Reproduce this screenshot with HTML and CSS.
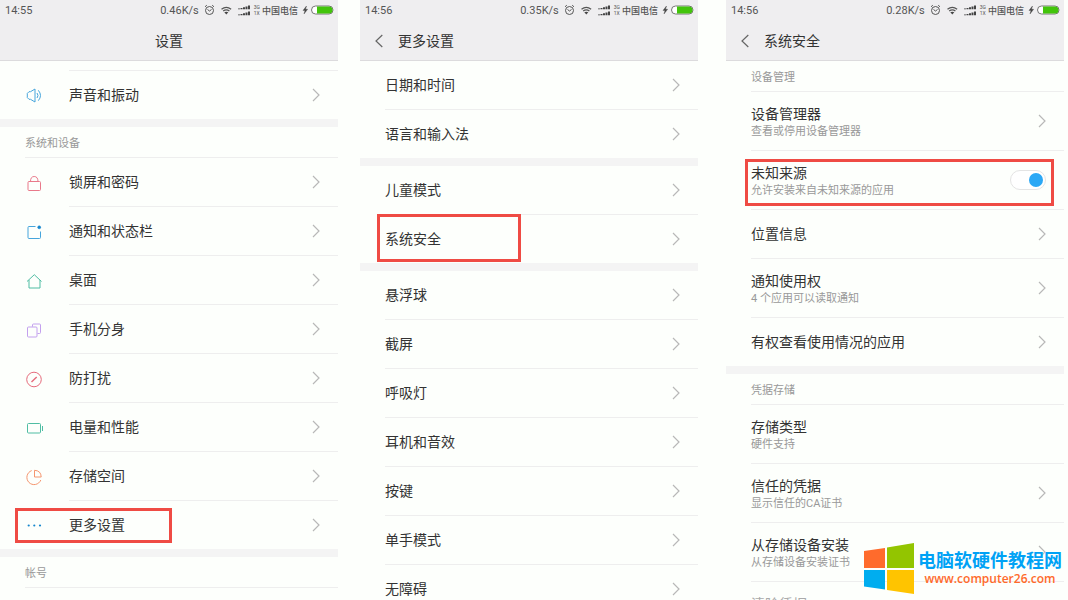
FILE: index.html
```
<!DOCTYPE html>
<html lang="zh-CN">
<head>
    <meta charset="UTF-8">
    <meta name="viewport" content="width=device-width, initial-scale=1.0">
    <title>设置</title>
    <link rel="stylesheet" href="styles.css">
</head>
<body>

    <!-- Shared icons -->
    <svg class="sprite" aria-hidden="true">
        <symbol id="chevron" viewBox="0 0 8 14">
            <path d="M1 1l6 6-6 6" fill="none" stroke="#b8b8b8" stroke-width="1.2"/>
        </symbol>
        <symbol id="back" viewBox="0 0 8 14">
            <path d="M7.3 1L1 7l6.3 6" fill="none" stroke="#666" stroke-width="1.2"/>
        </symbol>
        <symbol id="status" viewBox="0 0 54 12">
            <g fill="none" stroke="#555">
                <circle cx="5.5" cy="6.5" r="4"/>
                <path d="M3.5 5.5l2 1.5 2-1.5M1 2.8l1.8-1.6M10 2.8L8.2 1.2"/>
                <path d="M17.5 5.2q4.800-3.6 9.6 0M19.2 7q3.100-2.4 6.200 0" stroke-width="1.3"/>
            </g>
            <path d="M20.3 8.3q2-1.3 4 0l-2 2.200z" fill="#444"/>
            <g fill="#444">
                <path d="M34 4.400h2v.8h-2zM36.500 3.900h2v1.300h-2zM39 3.200h2v2h-2zM41.500 2.400h2v2.800h-2zM44 1.600h2v3.600h-2z"/>
                <path d="M34 10.400h2v.8h-2zM36.500 9.900h2v1.300h-2zM39 9.200h2v2h-2zM41.500 8.400h2v2.800h-2zM44 7.600h2v3.600h-2z"/>
            </g>
        </symbol>
        <symbol id="battery" viewBox="0 0 32 10">
            <path d="M4.500 1L1 5.400h2L2 9l3.600-4.700H3.500z" fill="#444" stroke="#444" stroke-width=".4"/>
            <rect x="9.500" y="1" width="21.500" height="8" rx="4" fill="#fff" stroke="#777"/>
            <path d="M15 1.500h12q3.500 0 3.500 3.500T27 8.500H15z" fill="#42c40b"/>
        </symbol>
    </svg>

    <main class="screens">

        <!-- Settings -->
        <section class="phone">
            <header class="top">
                <div class="status">
                    <span class="time">14:55</span>
                    <span class="speed">0.46K/s</span>
                    <svg class="status-icons"><use href="#status"/></svg>
                    <span class="net"><span>3G</span><span>1X</span></span>
                    <span class="carrier">中国电信</span>
                    <svg class="battery"><use href="#battery"/></svg>
                </div>
                <div class="bar bar-center"><h1>设置</h1></div>
            </header>
            <div class="list">
                <div class="row row-cut"><span class="icon"></span><span class="body"></span></div>
                <a class="row" href="#">
                    <svg class="icon" viewBox="0 0 18 18" stroke="#46a5dc"><path d="M10 3v13L5.500 13.300H4L2.300 11.600V7.400L4 5.700h1.500zM12 7q2 2.500 0 5M13.300 4.300q4.400 5.200 0 10.400"/></svg>
                    <span class="body"><span class="title">声音和振动</span><svg class="chevron"><use href="#chevron"/></svg></span>
                </a>
            </div>
            <h2>系统和设备</h2>
            <div class="list">
                <a class="row" href="#">
                    <svg class="icon" viewBox="0 0 18 18" stroke="#e9798a"><rect x="3" y="7.500" width="12.500" height="9" rx="1"/><path d="M5.500 7.500Q5.500 2.500 9.200 2.500T13 7.500"/></svg>
                    <span class="body"><span class="title">锁屏和密码</span><svg class="chevron"><use href="#chevron"/></svg></span>
                </a>
                <a class="row" href="#">
                    <svg class="icon" viewBox="0 0 18 18" stroke="#46a5dc"><path d="M10.500 3.500H4Q3 3.500 3 4.500v10q0 1 1 1h10.500q1 0 1-1V8.500"/><circle cx="14.200" cy="4.300" r="1.500" fill="#1687ce" stroke="#1687ce" stroke-width=".5"/></svg>
                    <span class="body"><span class="title">通知和状态栏</span><svg class="chevron"><use href="#chevron"/></svg></span>
                </a>
                <a class="row" href="#">
                    <svg class="icon" viewBox="0 0 18 18" stroke="#4fbda3"><path d="M2 9.500l7.300-6.800 7.200 6.800M4 8v8h11V8"/></svg>
                    <span class="body"><span class="title">桌面</span><svg class="chevron"><use href="#chevron"/></svg></span>
                </a>
                <a class="row" href="#">
                    <svg class="icon" viewBox="0 0 18 18" stroke="#c3a0ee"><rect x="2.500" y="6" width="9.500" height="10" rx="1"/><path d="M7.500 5.700V4q0-1 1-1h6q1 0 1 1v7.500q0 1-1 1h-2"/></svg>
                    <span class="body"><span class="title">手机分身</span><svg class="chevron"><use href="#chevron"/></svg></span>
                </a>
                <a class="row" href="#">
                    <svg class="icon" viewBox="0 0 18 18" stroke="#e66a7b"><circle cx="9" cy="9.500" r="7.300"/><path d="M6.500 12l5.200-5" stroke-width="1.400"/></svg>
                    <span class="body"><span class="title">防打扰</span><svg class="chevron"><use href="#chevron"/></svg></span>
                </a>
                <a class="row" href="#">
                    <svg class="icon" viewBox="0 0 18 18" stroke="#4fbda3"><rect x="2.500" y="4.500" width="13" height="9.500" rx="1"/><path d="M17.500 7v5"/></svg>
                    <span class="body"><span class="title">电量和性能</span><svg class="chevron"><use href="#chevron"/></svg></span>
                </a>
                <a class="row" href="#">
                    <svg class="icon" viewBox="0 0 18 18" stroke="#f5966f"><path d="M6.700 2.600A7.200 7.200 0 1 0 15.800 12M9.500 2.300V9h6.700Q16 2.600 9.500 2.300z"/></svg>
                    <span class="body"><span class="title">存储空间</span><svg class="chevron"><use href="#chevron"/></svg></span>
                </a>
                <a class="row" href="#">
                    <svg class="icon" viewBox="0 0 18 18"><g fill="#1687ce"><circle cx="3.700" cy="9.500" r="1.100"/><circle cx="9.300" cy="9.500" r="1.100"/><circle cx="15" cy="9.500" r="1.100"/></g></svg>
                    <span class="body"><span class="title">更多设置</span><svg class="chevron"><use href="#chevron"/></svg></span>
                    <span class="mark mark-more"></span>
                </a>
            </div>
            <h2>帐号</h2>
        </section>

        <!-- More settings -->
        <section class="phone">
            <header class="top">
                <div class="status">
                    <span class="time">14:56</span>
                    <span class="speed">0.35K/s</span>
                    <svg class="status-icons"><use href="#status"/></svg>
                    <span class="net"><span>3G</span><span>1X</span></span>
                    <span class="carrier">中国电信</span>
                    <svg class="battery"><use href="#battery"/></svg>
                </div>
                <div class="bar">
                    <button class="back" type="button" aria-label="返回"><svg><use href="#back"/></svg></button>
                    <h1>更多设置</h1>
                </div>
            </header>
            <div class="list">
                <a class="row" href="#"><span class="body"><span class="title">日期和时间</span><svg class="chevron"><use href="#chevron"/></svg></span></a>
                <a class="row" href="#"><span class="body"><span class="title">语言和输入法</span><svg class="chevron"><use href="#chevron"/></svg></span></a>
            </div>
            <div class="list">
                <a class="row" href="#"><span class="body"><span class="title">儿童模式</span><svg class="chevron"><use href="#chevron"/></svg></span></a>
                <a class="row" href="#">
                    <span class="body"><span class="title">系统安全</span><svg class="chevron"><use href="#chevron"/></svg></span>
                    <span class="mark mark-security"></span>
                </a>
            </div>
            <div class="list">
                <a class="row" href="#"><span class="body"><span class="title">悬浮球</span><svg class="chevron"><use href="#chevron"/></svg></span></a>
                <a class="row" href="#"><span class="body"><span class="title">截屏</span><svg class="chevron"><use href="#chevron"/></svg></span></a>
                <a class="row" href="#"><span class="body"><span class="title">呼吸灯</span><svg class="chevron"><use href="#chevron"/></svg></span></a>
                <a class="row" href="#"><span class="body"><span class="title">耳机和音效</span><svg class="chevron"><use href="#chevron"/></svg></span></a>
                <a class="row" href="#"><span class="body"><span class="title">按键</span><svg class="chevron"><use href="#chevron"/></svg></span></a>
                <a class="row" href="#"><span class="body"><span class="title">单手模式</span><svg class="chevron"><use href="#chevron"/></svg></span></a>
                <a class="row" href="#"><span class="body"><span class="title">无障碍</span><svg class="chevron"><use href="#chevron"/></svg></span></a>
            </div>
        </section>

        <!-- System security -->
        <section class="phone">
            <header class="top">
                <div class="status">
                    <span class="time">14:56</span>
                    <span class="speed">0.28K/s</span>
                    <svg class="status-icons"><use href="#status"/></svg>
                    <span class="net"><span>3G</span><span>1X</span></span>
                    <span class="carrier">中国电信</span>
                    <svg class="battery"><use href="#battery"/></svg>
                </div>
                <div class="bar">
                    <button class="back" type="button" aria-label="返回"><svg><use href="#back"/></svg></button>
                    <h1>系统安全</h1>
                </div>
            </header>
            <h2>设备管理</h2>
            <div class="list">
                <a class="row row-tall" href="#">
                    <span class="body"><span class="text"><span class="title">设备管理器</span><span class="sub">查看或停用设备管理器</span></span><svg class="chevron"><use href="#chevron"/></svg></span>
                </a>
                <label class="row row-tall" for="unknown-sources">
                    <span class="body"><span class="text"><span class="title">未知来源</span><span class="sub">允许安装来自未知来源的应用</span></span><input class="switch" type="checkbox" id="unknown-sources" checked></span>
                    <span class="mark mark-unknown"></span>
                </label>
                <a class="row" href="#"><span class="body"><span class="title">位置信息</span><svg class="chevron"><use href="#chevron"/></svg></span></a>
                <a class="row row-tall" href="#">
                    <span class="body"><span class="text"><span class="title">通知使用权</span><span class="sub">4 个应用可以读取通知</span></span><svg class="chevron"><use href="#chevron"/></svg></span>
                </a>
                <a class="row" href="#"><span class="body"><span class="title">有权查看使用情况的应用</span><svg class="chevron"><use href="#chevron"/></svg></span></a>
            </div>
            <h2>凭据存储</h2>
            <div class="list">
                <div class="row row-tall">
                    <span class="body"><span class="text"><span class="title">存储类型</span><span class="sub">硬件支持</span></span></span>
                </div>
                <a class="row row-tall" href="#">
                    <span class="body"><span class="text"><span class="title">信任的凭据</span><span class="sub">显示信任的CA证书</span></span><svg class="chevron"><use href="#chevron"/></svg></span>
                </a>
                <a class="row row-tall" href="#">
                    <span class="body"><span class="text"><span class="title">从存储设备安装</span><span class="sub">从存储设备安装证书</span></span><svg class="chevron"><use href="#chevron"/></svg></span>
                </a>
                <div class="row row-tall disabled">
                    <span class="body"><span class="text"><span class="title">清除凭据</span></span></span>
                </div>
            </div>
        </section>
    </main>

    <!-- Site logo -->
    <div class="watermark">
        <svg viewBox="0 0 50 51" width="50" height="51">
            <path d="M0 8l21-3v20H0z" fill="#ff6b2c"/>
            <path d="M23 4.500L50 0v25H23z" fill="#93c500"/>
            <path d="M0 27h21v19.500L0 43.500z" fill="#00adef"/>
            <path d="M23 27h27v24l-27-4z" fill="#ffc400"/>
        </svg>
        <div class="watermark-text">
            <strong>电脑软硬件教程网</strong>
            <span>www.computer26.com</span>
        </div>
    </div>

</body>
</html>
```
FILE: styles.css
```
* {
    box-sizing: border-box;
}
body {
    margin: 0;
    background: #fdfffc;
    color: #333;
    font-family: Roboto, "Noto Sans CJK SC", sans-serif;
    font-size: 14px;
}
a {
    color: inherit;
    text-decoration: none;
}
h1, h2 {
    margin: 0;
    font-weight: normal;
}
.sprite {
    display: none;
}
.screens {
    display: flex;
    gap: 22px;
    height: 100vh;
    padding-right: 4px;
    overflow: hidden;
}
.phone {
    flex: 1;
    min-width: 0;
}
.phone:last-child {
    margin-left: 6px;
}

/* status bar and title */
.top {
    height: 61px;
    background: #efeef0;
    border-bottom: 1px solid #dcdbdd;
}
.status {
    display: flex;
    align-items: center;
    height: 20px;
    padding: 0 4px 0 5px;
    font-size: 11px;
    color: #555;
}
.speed {
    margin-left: auto;
}
.status-icons {
    width: 54px;
    height: 12px;
    margin-left: 5px;
    margin-right: -4px;
}
.net {
    display: flex;
    flex-direction: column;
    margin-right: 2px;
    font-size: 5px;
    line-height: 6px;
}
.carrier {
    font-size: 9px;
    font-weight: 500;
}
.battery {
    width: 32px;
    height: 10px;
    margin-left: 4px;
}
.bar {
    display: flex;
    align-items: center;
    height: 41px;
    padding-left: 15px;
}
.bar-center {
    justify-content: center;
    padding: 0;
}
.bar h1 {
    font-size: 14px;
    line-height: 20px;
}
.back {
    width: 23px;
    height: 20px;
    padding: 3px 0;
    border: 0;
    background: none;
}
.back svg {
    display: block;
    width: 8px;
    height: 14px;
}

/* lists */
.list + .list,
.list + h2 {
    border-top: 8px solid #f4f4f4;
}
h2 {
    padding-top: 3px;
    padding-left: 25px;
    font-size: 11px;
    line-height: 27px;
    color: #999;
}
h2::after {
    content: "";
    display: block;
    height: 1px;
    background: #eee;
}
.row {
    display: flex;
    align-items: center;
    position: relative;
    padding-left: 25px;
}
.icon {
    flex: none;
    width: 18px;
    height: 18px;
    margin-right: 26px;
    fill: none;
}
.body {
    flex: 1;
    display: flex;
    align-items: center;
    justify-content: space-between;
    height: 49px;
    padding-right: 18px;
    border-bottom: 1px solid #eee;
}
.row:last-child .body {
    height: 48px;
    border-bottom: 0;
}
.row-cut,
.row-cut .body {
    height: 10px;
}
.row-tall .body,
.row-tall:last-child .body {
    height: 59px;
}
.text {
    display: flex;
    flex-direction: column;
    align-self: flex-start;
    padding-top: 13px;
}
.title {
    line-height: 18px;
}
.sub {
    font-size: 11px;
    line-height: 17px;
    color: #999;
}
.disabled {
    color: #aaa;
}
.chevron {
    width: 8px;
    height: 14px;
}

.switch {
    appearance: none;
    width: 36px;
    height: 20px;
    margin: 0;
    padding: 2px;
    border: 1px solid #e4e4e4;
    border-radius: 10px;
    background: #fff;
}
.switch::before {
    content: "";
    display: block;
    width: 14px;
    height: 14px;
    border-radius: 50%;
    background: #ccc;
}
.switch:checked::before {
    margin-left: auto;
    background: #2ba8f5;
}

/* red frames over the rows */
.mark {
    position: absolute;
    border: 3px solid #ef4b44;
}
.mark-more {
    top: 7px;
    left: 15px;
    width: 157px;
    height: 35px;
}
.mark-security {
    top: -1px;
    left: 17px;
    width: 144px;
    height: 48px;
}
.mark-unknown {
    top: 8px;
    left: 19px;
    right: 10px;
    height: 47px;
}

.watermark {
    position: absolute;
    right: 6px;
    bottom: 6px;
    display: flex;
    gap: 4px;
}
.watermark-text {
    display: flex;
    flex-direction: column;
    align-items: center;
    padding-top: 5px;
    color: #ff6a2b;
    font: 600 12px/18px "Open Sans", sans-serif;
}
.watermark-text strong {
    font: bold 18px/22px "Noto Sans CJK SC", sans-serif;
    color: #00a2f5;
    text-shadow: 0 0 2px #fff;
}
```
